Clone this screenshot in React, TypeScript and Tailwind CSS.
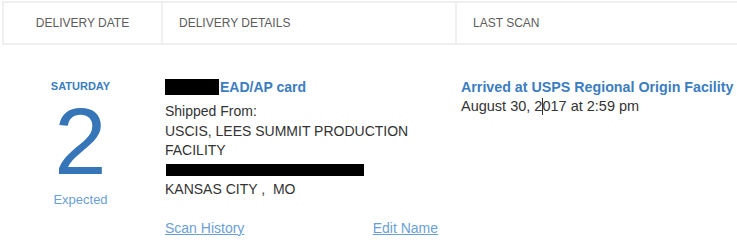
export default function App() {
  return (
    <div className="w-[737px] h-[240px] bg-white overflow-hidden font-['Liberation_Sans',Arial,sans-serif] text-[#333]">
      {/* table header */}
      <div className="ml-[2px] mt-px flex h-[44px] border-y-2 border-l-2 border-[#efefef] text-[12px] text-[#5c5c5c]">
        <div className="w-[157px] flex items-center justify-center">DELIVERY DATE</div>
        <div className="w-[294px] flex items-center pl-4 border-l-2 border-[#efefef]">DELIVERY DETAILS</div>
        <div className="flex-1 flex items-center pl-4 border-l-2 border-[#efefef]">LAST SCAN</div>
      </div>

      {/* row */}
      <div className="flex pt-[32px]">
        <div className="w-[161px] flex flex-col items-center">
          <div className="text-[11px] leading-[16px] font-bold text-[#3b7dbf] mt-px">SATURDAY</div>
          <div className="text-[94px] leading-none text-[#3575b8] mt-[1px]">2</div>
          <div className="text-[13px] leading-[16px] text-[#6b9fd3] mt-[3px]">Expected</div>
        </div>

        <div className="w-[294px] pl-[4px] pr-[17px] flex flex-col">
          <div className="flex items-center h-[20px]">
            <span className="inline-block w-[54px] h-[16px] bg-black" />
            <span className="ml-[1px] text-[14px] font-bold text-[#3b7dbf]">EAD/AP card</span>
          </div>
          <div className="mt-[5px] text-[14px] leading-[19.5px] text-[#333]">
            <div>Shipped From:</div>
            <div>USCIS, LEES SUMMIT PRODUCTION FACILITY</div>
            <div className="h-[19.5px] flex items-center">
              <span className="block w-[198px] h-[12px] bg-black ml-[1px]" />
            </div>
            <div>KANSAS CITY ,&nbsp; MO</div>
          </div>
          <div className="mt-[18px] flex justify-between text-[14px] leading-[20px] text-[#6b9fd3]">
            <a className="underline">Scan History</a>
            <a className="underline">Edit Name</a>
          </div>
        </div>

        <div className="flex-1 pl-[6px]">
          <div className="text-[14.25px] leading-[20px] font-bold text-[#3b7dbf] whitespace-nowrap">
            Arrived at USPS Regional Origin Facility
          </div>
          <div className="text-[14.5px] leading-[19px] text-[#333] whitespace-nowrap">
            August 30, 2
            <span className="relative inline-block w-0 h-0">
              <span className="absolute left-0 -top-[13px] w-px h-[17px] bg-[#333]" />
            </span>
            017 at 2:59 pm
          </div>
        </div>
      </div>
    </div>
  )
}
